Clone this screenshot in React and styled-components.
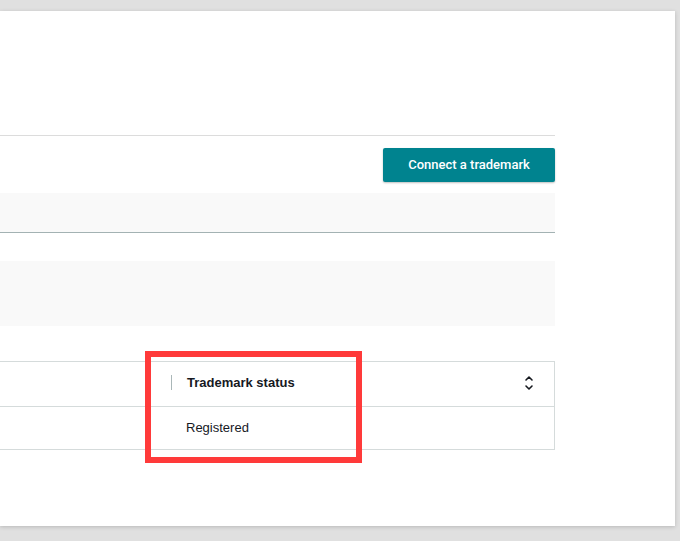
import React from "react";
import styled, { createGlobalStyle } from "styled-components";

const Global = createGlobalStyle`
  html, body { margin: 0; padding: 0; background: #e0e0e0; }
  body { font-family: Roboto, "Liberation Sans", Arial, sans-serif; overflow: hidden; }
`;

const Stage = styled.div`
  width: 680px;
  height: 541px;
  padding-top: 11px;
  box-sizing: border-box;
  display: flex;
`;

const Panel = styled.div`
  width: 675px;
  height: 515px;
  background: #fff;
  box-shadow: 0 1px 4px rgba(0, 0, 0, 0.18);
  box-sizing: border-box;
  padding-right: 120px;
`;

const Content = styled.div`
  width: 555px;
  display: flex;
  flex-direction: column;
  padding-top: 124px;
`;

const Divider = styled.div`
  height: 1px;
  background: #dcdcdc;
`;

const ButtonRow = styled.div`
  display: flex;
  justify-content: flex-end;
  margin-top: 12px;
`;

const PrimaryButton = styled.button`
  width: 172px;
  height: 34px;
  border: none;
  border-radius: 2px;
  background: #00838f;
  color: #fff;
  font-family: Roboto, "Liberation Sans", Arial, sans-serif;
  font-size: 13px;
  font-weight: 500;
  box-shadow: 0 1px 2px rgba(0, 0, 0, 0.25);
  padding: 0 0 2px;
`;

const FilterBar = styled.div`
  margin-top: 11px;
  height: 39px;
  background: #f9f9f9;
  border-bottom: 1px solid #a3b2b3;
`;

const Block = styled.div`
  margin-top: 28px;
  height: 65px;
  background: #f9f9f9;
`;

const TableWrap = styled.div`
  margin-top: 35px;
  position: relative;
  font-family: "Liberation Sans", Arial, sans-serif;
`;

const Table = styled.div`
  border: 1px solid #d5dbdb;
  border-left: none;
`;

const HeaderRow = styled.div`
  height: 45px;
  box-sizing: border-box;
  display: flex;
  align-items: center;
  border-bottom: 1px solid #d5dbdb;
  padding: 0 20px 3px 171px;
`;

const HeaderDivider = styled.span`
  width: 1px;
  height: 15px;
  background: #aab7b8;
  margin-right: 15px;
`;

const HeaderLabel = styled.span`
  flex: 1;
  font-size: 13px;
  font-weight: 700;
  color: #16191f;
`;

const BodyRow = styled.div`
  height: 42px;
  box-sizing: border-box;
  display: flex;
  align-items: center;
  padding: 0 0 2px 186px;
  font-size: 13px;
  color: #16191f;
`;

const Highlight = styled.div`
  position: absolute;
  left: 145px;
  top: -10px;
  width: 217px;
  height: 112px;
  border: 6px solid #ff3a3a;
  box-sizing: border-box;
  pointer-events: none;
`;

const SortIcon = () => (
  <svg width="10" height="18" viewBox="0 0 10 18" fill="none">
    <path d="M2 6 L5 3 L8 6" stroke="#16191f" strokeWidth="1.6" strokeLinecap="round" strokeLinejoin="round" />
    <path d="M2 12 L5 15 L8 12" stroke="#16191f" strokeWidth="1.6" strokeLinecap="round" strokeLinejoin="round" />
  </svg>
);

export default function App() {
  return (
    <>
      <Global />
      <Stage>
        <Panel>
          <Content>
            <Divider />
            <ButtonRow>
              <PrimaryButton>Connect a trademark</PrimaryButton>
            </ButtonRow>
            <FilterBar />
            <Block />
            <TableWrap>
              <Table>
                <HeaderRow>
                  <HeaderDivider />
                  <HeaderLabel>Trademark status</HeaderLabel>
                  <SortIcon />
                </HeaderRow>
                <BodyRow>Registered</BodyRow>
              </Table>
              <Highlight />
            </TableWrap>
          </Content>
        </Panel>
      </Stage>
    </>
  );
}
